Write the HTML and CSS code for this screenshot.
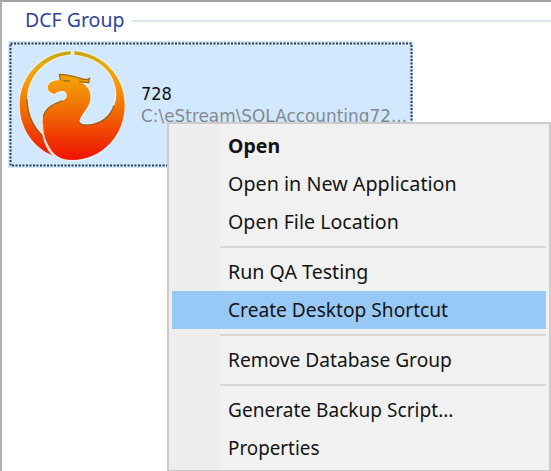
FILE: index.html
```html
<!DOCTYPE html>
<html lang="en">
<head>
<meta charset="utf-8">
<title>DCF Group</title>
<link rel="stylesheet" href="styles.css">
</head>
<body>
<main class="panel">
  <header class="group"><h1><span class="fit-group">DCF Group</span></h1><i class="rule"></i></header>
  <section class="database">
    <svg class="selection" width="405" height="127"><rect x="2.5" y="2.5" width="401" height="122"/></svg>
    <svg class="logo" viewBox="0 0 375 375">
      <defs>
        <linearGradient id="flame" x1="0" y1="28" x2="0" y2="354" gradientUnits="userSpaceOnUse">
          <stop offset="0" stop-color="#c0a30e"/><stop offset=".12" stop-color="#e2ae0a"/><stop offset=".28" stop-color="#f39c06"/><stop offset=".55" stop-color="#f16c04"/><stop offset=".8" stop-color="#f03702"/><stop offset="1" stop-color="#ee1303"/>
        </linearGradient>
      </defs>
      <g class="halo"><path d="M182 28C98 31 29 101 29 188C29 259 70 316 129 341C113 323 103 302 98 281C68 253 51 211 51 169C53 101 108 45 182 37Z"/>
      <path d="M193 28C278 34 344 102 344 190C344 280 276 354 187 354C152 354 134 340 123 323C103 294 96 262 98 235C101 195 136 184 158 176C169 172 173 163 169 153C163 144 146 146 134 155C121 155 111 145 113 133C117 122 131 114 151 115L148 97C177 97 201 105 218 111Q231 114 239 109L236 123L211 120C234 130 243 149 241 170C239 198 212 215 208 239C211 249 230 250 248 247C291 239 319 199 319 157C318 92 264 44 193 38Z"/></g>
      <g class="bird"><path d="M182 28C98 31 29 101 29 188C29 259 70 316 129 341C113 323 103 302 98 281C68 253 51 211 51 169C53 101 108 45 182 37Z"/>
      <path d="M193 28C278 34 344 102 344 190C344 280 276 354 187 354C152 354 134 340 123 323C103 294 96 262 98 235C101 195 136 184 158 176C169 172 173 163 169 153C163 144 146 146 134 155C121 155 111 145 113 133C117 122 131 114 151 115L148 97C177 97 201 105 218 111Q231 114 239 109L236 123L211 120C234 130 243 149 241 170C239 198 212 215 208 239C211 249 230 250 248 247C291 239 319 199 319 157C318 92 264 44 193 38Z"/></g>
      <path class="shade" d="M151 115L148 97C177 97 201 105 218 111Q231 114 239 109L236 122L208 119M159 114Q168 120 179 116M51 171C52 213 69 254 98 281M100 225C104 197 132 185 158 176M208 241C213 250 230 250 248 247C278 241 302 220 312 190"/>
      <path class="seam" d="M97 244C95 279 108 320 130 341"/>
    </svg>
    <div class="details"><strong><span class="fit-name">728</span></strong><span class="path"><span class="fit-path">C:\eStream\SQLAccounting72...</span></span></div>
  </section>
  <nav class="menu">
    <div class="item default"><span class="fit-open">Open</span></div>
    <div class="item"><span class="fit-new">Open in New Application</span></div>
    <div class="item"><span class="fit-location">Open File Location</span></div>
    <hr>
    <div class="item"><span class="fit-run">Run QA Testing</span></div>
    <div class="item active"><span class="fit-create">Create Desktop Shortcut</span></div>
    <hr>
    <div class="item"><span class="fit-remove">Remove Database Group</span></div>
    <hr>
    <div class="item"><span class="fit-generate">Generate Backup Script...</span></div>
    <div class="item"><span class="fit-properties">Properties</span></div>
  </nav>
</main>
</body>
</html>
```
FILE: styles.css
```css
*{box-sizing:border-box}
body{margin:0;background:#fff;font-family:"Noto Sans","Open Sans",sans-serif;overflow:hidden}
.panel{position:relative;width:551px;height:471px;border-top:2px solid #a2a2a2;border-left:2px solid #b1b1b1}
.group{display:flex;align-items:center;height:36px;padding-left:23px}
h1{margin:0;width:107px;font-size:19.5px;line-height:36px;font-weight:400;color:#30459a;white-space:nowrap}
.rule{flex:1;height:2px;background:#dce4f2;margin-top:1px}
.group span,.details span span,.details strong span,.item span{display:inline-block;transform-origin:0 50%;white-space:nowrap}
.database{position:relative;display:flex;width:405px;height:127px;margin:3px 0 0 6px;background:#d1e8ff}
.selection{position:absolute;left:0;top:0}
.selection rect{fill:none;stroke:#30363d;stroke-width:2;stroke-dasharray:2 1.5}
.logo{width:125px;height:125px;margin:1px 0 0 2px;flex:none}
.halo path{fill:none;stroke:#f6eee9;stroke-width:7}
.bird path{fill:url(#flame)}
.shade{fill:none;stroke:#76510e;stroke-width:4;opacity:.75}
.seam{fill:none;stroke:#ffd9ca;stroke-width:5}
.details{padding:42px 0 0 6px;font-family:"DejaVu Sans","Noto Sans",sans-serif;font-size:18px;line-height:22px}
.details strong{display:block;height:22px;font-weight:400;color:#111}
.path{display:block;height:22px;color:#85898e}
.menu{position:absolute;left:165px;top:120px;width:384px;height:349px;padding:3px 3px 0;border:2px solid #ccc;border-bottom-width:1px;background:linear-gradient(90deg,#eee 51px,#f1f1f1 51px)}
.item{height:38px;padding-left:56px;line-height:38px;font-size:19.5px;color:#141414}
.default{font-weight:700}
.active{background:#98c8f6}
hr{height:2px;margin:5px 0 5px 48px;border:0;background:#d7d7d7}
.item .fit-new{transform:scaleX(1.012)}
.item .fit-location,.item .fit-run{transform:scaleX(1.006)}
.item .fit-create{transform:scaleX(.982)}
.item .fit-remove{transform:scaleX(.982)}
.item .fit-generate{transform:scaleX(.979)}
.item .fit-properties{transform:scaleX(.965)}
.details .fit-name{transform:scaleX(.9)}
.details .fit-path{transform:scaleX(.938)}
```
